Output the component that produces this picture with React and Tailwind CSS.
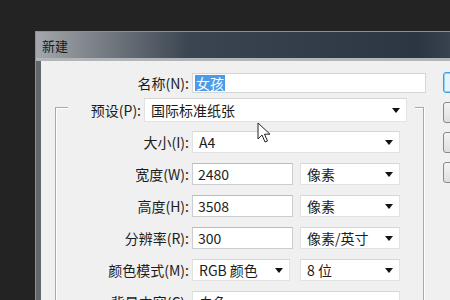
import React from 'react';

const FONT = { fontFamily: '"Noto Sans CJK SC", "Noto Sans", sans-serif' };

function Arrow() {
  return (
    <svg width="8" height="5" viewBox="0 0 8 5" className="shrink-0">
      <path d="M0 0 L8 0 L4 5 Z" fill="#111" />
    </svg>
  );
}

function Select({ value, w, h = 'h-[22px]' }) {
  return (
    <div className={`${w} ${h} ml-[3px] flex items-center justify-between bg-white border border-[#e2e2e2] border-t-[#d6d6d6] pl-[6px] pr-[6px] text-[14px] text-[#1c1c1c]`}>
      <span className="leading-none">{value}</span>
      <Arrow />
    </div>
  );
}

function Input({ value, w }) {
  return (
    <div className={`${w} h-[22px] ml-[3px] flex items-center bg-white border border-[#c9cdd1] border-t-[#b9bdc1] pl-[5px] text-[14px] text-[#1c1c1c]`}>
      <span className="leading-none">{value}</span>
    </div>
  );
}

function Row({ label, children }) {
  return (
    <div className="flex items-center h-[22px]">
      <div className="w-[133px] text-right text-[14px] text-[#1c1c1c] leading-none">{label}</div>
      {children}
    </div>
  );
}

function Button({ primary }) {
  return (
    <div
      className={`w-[70px] h-[21px] rounded-[3px] border ${
        primary
          ? 'border-[#3c9ee6] bg-[#e5f3fc] shadow-[inset_0_0_0_1px_#8fd0f5]'
          : 'border-[#8a8a8a] bg-linear-to-b from-[#f4f4f4] to-[#dedede]'
      }`}
    />
  );
}

function Cursor() {
  return (
    <svg width="14" height="22" viewBox="0 0 14 22" className="absolute left-[257px] top-[122px]">
      <path
        d="M1 1 L1 17 L5 13 L8 20 L10.5 19 L7.5 12.2 L13 12.2 Z"
        fill="#fff"
        stroke="#222"
        strokeWidth="1"
        strokeLinejoin="round"
      />
    </svg>
  );
}

export default function App() {
  return (
    <div className="relative w-[450px] h-[300px] overflow-hidden bg-[#232323] pt-[31px] pl-[35px]" style={FONT}>
      <div className="w-[480px] border-t border-l border-[#8e9194] bg-[#63676b] flex flex-col">
        <div className="h-[26px] shrink-0 flex items-center pl-[6px] bg-[linear-gradient(90deg,#a4a8ac_0%,#7c8288_12%,#3b4551_32%,#2c3642_80%,#525e6b_100%)]">
          <span className="text-[13px] text-[#1a1a1a] leading-none">新建</span>
        </div>
        <div className="h-[3px] shrink-0 bg-[#b3b6b9]" />
        <div className="ml-[5px] bg-[#f0f0f0] flex">
          <div className="w-[386px] shrink-0 flex flex-col">
            <div className="mt-[12px] flex items-center h-[20px]">
              <div className="w-[148px] text-right text-[14px] text-[#1c1c1c] leading-none">名称(N):</div>
              <div className="w-[234px] h-[20px] ml-[3px] flex items-center bg-white border border-[#d4d7da] pl-[2px] text-[14px]">
                <span className="bg-[#4d9be6] text-white leading-none px-[1px] py-[1px]">女孩</span>
              </div>
            </div>
            <div className="mt-[14px] ml-[14px] w-[369px] h-[260px] border-t border-l border-r border-[#a9a9a9] shadow-[inset_1px_1px_0_#ffffff,1px_0_0_#ffffff]">
              <div className="-mt-[10px] ml-[12px] w-[347px] h-[24px] bg-[#f0f0f0] flex items-center">
                <div className="w-[73px] text-right text-[14px] text-[#1c1c1c] leading-none">预设(P):</div>
                <Select value="国际标准纸张" w="w-[263px]" h="h-[24px]" />
              </div>
              <div className="mt-[9px] flex flex-col gap-[10px]">
                <Row label="大小(I):">
                  <Select value="A4" w="w-[208px]" />
                </Row>
                <Row label="宽度(W):">
                  <Input value="2480" w="w-[101px]" />
                  <div className="ml-[4px] flex">
                    <Select value="像素" w="w-[100px]" />
                  </div>
                </Row>
                <Row label="高度(H):">
                  <Input value="3508" w="w-[101px]" />
                  <div className="ml-[4px] flex">
                    <Select value="像素" w="w-[100px]" />
                  </div>
                </Row>
                <Row label="分辨率(R):">
                  <Input value="300" w="w-[101px]" />
                  <div className="ml-[4px] flex">
                    <Select value="像素/英寸" w="w-[100px]" />
                  </div>
                </Row>
                <Row label="颜色模式(M):">
                  <Select value="RGB 颜色" w="w-[98px]" />
                  <div className="ml-[7px] flex">
                    <Select value="8 位" w="w-[100px]" />
                  </div>
                </Row>
                <Row label="背景内容(C):">
                  <Select value="白色" w="w-[208px]" />
                </Row>
              </div>
            </div>
          </div>
          <div className="ml-[16px] pt-[11px] flex flex-col gap-[9px]">
            <Button primary />
            <Button />
            <Button />
            <Button />
          </div>
        </div>
      </div>
      <Cursor />
    </div>
  );
}
